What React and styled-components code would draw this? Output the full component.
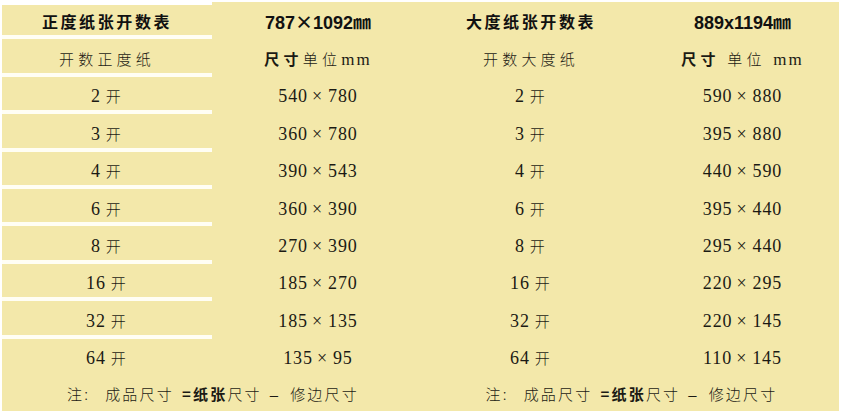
import React from "react";
import styled, { createGlobalStyle } from "styled-components";

const GlobalStyle = createGlobalStyle`
  html, body {
    margin: 0;
    padding: 0;
    background: #ffffff;
  }
  body {
    font-family: "Noto Sans CJK SC", "Liberation Serif", serif;
    color: #1b1a14;
  }
`;

const Page = styled.div`
  width: 844px;
  height: 411px;
  padding: 2px 5px 0 2px;
  box-sizing: border-box;
  background: #ffffff;
  overflow: hidden;
`;

const Table = styled.table`
  width: 837px;
  border-collapse: separate;
  border-spacing: 0;
  table-layout: fixed;
  background: #f3e8aa;
`;

const Row = styled.tr`
  height: ${(p) => (p.$note ? "35px" : "37.4px")};
`;

// 第一列带白色分隔线，其余列是整块底色
const Cell = styled.td`
  padding: 0 0 0 ${(p) => p.$shift || 0}px;
  text-align: center;
  vertical-align: middle;
  white-space: nowrap;
  box-shadow: ${(p) =>
    p.$top
      ? "inset 0 3px 0 #ffffff, inset 0 -4px 0 #fffef4"
      : p.$line
      ? "inset 0 -4px 0 #fffef4"
      : "none"};
`;

const Title = styled.span`
  font-family: "Noto Sans CJK SC", sans-serif;
  font-weight: 700;
  font-size: 16px;
  letter-spacing: 2.6px;
  color: #111;
`;

const Size = styled.span`
  font-family: "Liberation Sans", "Noto Sans CJK SC", sans-serif;
  font-weight: 700;
  font-size: 18px;
  color: #111;
`;

const Wide = styled.span`
  font-family: "Noto Sans CJK SC", sans-serif;
`;

const Cjk = styled.span`
  font-family: "Noto Sans CJK SC", sans-serif;
  font-weight: ${(p) => (p.$bold ? 700 : 300)};
  font-size: 15px;
  letter-spacing: ${(p) => (p.$tight ? 2.2 : 4.2)}px;
  margin-left: ${(p) => p.$gap || 0}px;
`;

const Num = styled.span`
  font-family: "Liberation Serif", serif;
  font-size: 18px;
  letter-spacing: 0.9px;
`;

const Times = styled.span`
  margin: 0 5px 0 4px;
`;

const Dash = styled.span`
  font-family: "Liberation Sans", sans-serif;
  font-size: 15px;
  margin: 0 12px 0 8px;
`;

const Spec = styled.span`
  font-family: "Liberation Serif", serif;
  font-size: 17px;
  letter-spacing: 2px;
`;

const rows = [
  ["2", "540 × 780", "590 × 880"],
  ["3", "360 × 780", "395 × 880"],
  ["4", "390 × 543", "440 × 590"],
  ["6", "360 × 390", "395 × 440"],
  ["8", "270 × 390", "295 × 440"],
  ["16", "185 × 270", "220 × 295"],
  ["32", "185 × 135", "220 × 145"],
  ["64", "135 × 95", "110 × 145"],
];

const Kai = ({ n }) => (
  <>
    <Num>{n}</Num>
    <Cjk $gap={5} $tight>
      开
    </Cjk>
  </>
);

const Dim = ({ value }) => {
  const [w, h] = value.split(" × ");
  return (
    <Num>
      {w}
      <Times>×</Times>
      {h}
    </Num>
  );
};

const Note = () => (
  <>
    <Cjk $tight>注:</Cjk>
    <Cjk $tight $gap={15}>
      成品尺寸
    </Cjk>
    <Cjk $tight $bold $gap={8}>
      =纸张
    </Cjk>
    <Cjk $tight>尺寸</Cjk>
    <Dash>–</Dash>
    <Cjk $tight>修边尺寸</Cjk>
  </>
);

export default function App() {
  return (
    <Page>
      <GlobalStyle />
      <Table>
        <colgroup>
          <col style={{ width: 210 }} />
          <col style={{ width: 212 }} />
          <col style={{ width: 214 }} />
          <col />
        </colgroup>
        <tbody>
          <Row>
            <Cell $top>
              <Title>正度纸张开数表</Title>
            </Cell>
            <Cell>
              <Size>
                787<Wide>×</Wide>1092<Wide>㎜</Wide>
              </Size>
            </Cell>
            <Cell>
              <Title>大度纸张开数表</Title>
            </Cell>
            <Cell $shift={8}>
              <Size>
                889x1194<Wide>㎜</Wide>
              </Size>
            </Cell>
          </Row>
          <Row>
            <Cell $line>
              <Cjk>开数正度纸</Cjk>
            </Cell>
            <Cell>
              <Cjk $bold>尺寸</Cjk>
              <Cjk>单位</Cjk>
              <Spec>mm</Spec>
            </Cell>
            <Cell>
              <Cjk>开数大度纸</Cjk>
            </Cell>
            <Cell $shift={8}>
              <Cjk $bold>尺寸 </Cjk>
              <Cjk>单位 </Cjk>
              <Spec>mm</Spec>
            </Cell>
          </Row>
          {rows.map(([n, a, b], i) => (
            <Row key={n}>
              <Cell $line={i < rows.length - 1}>
                <Kai n={n} />
              </Cell>
              <Cell>
                <Dim value={a} />
              </Cell>
              <Cell>
                <Kai n={n} />
              </Cell>
              <Cell $shift={8}>
                <Dim value={b} />
              </Cell>
            </Row>
          ))}
          <Row $note>
            <Cell colSpan={2}>
              <Note />
            </Cell>
            <Cell colSpan={2}>
              <Note />
            </Cell>
          </Row>
        </tbody>
      </Table>
    </Page>
  );
}
